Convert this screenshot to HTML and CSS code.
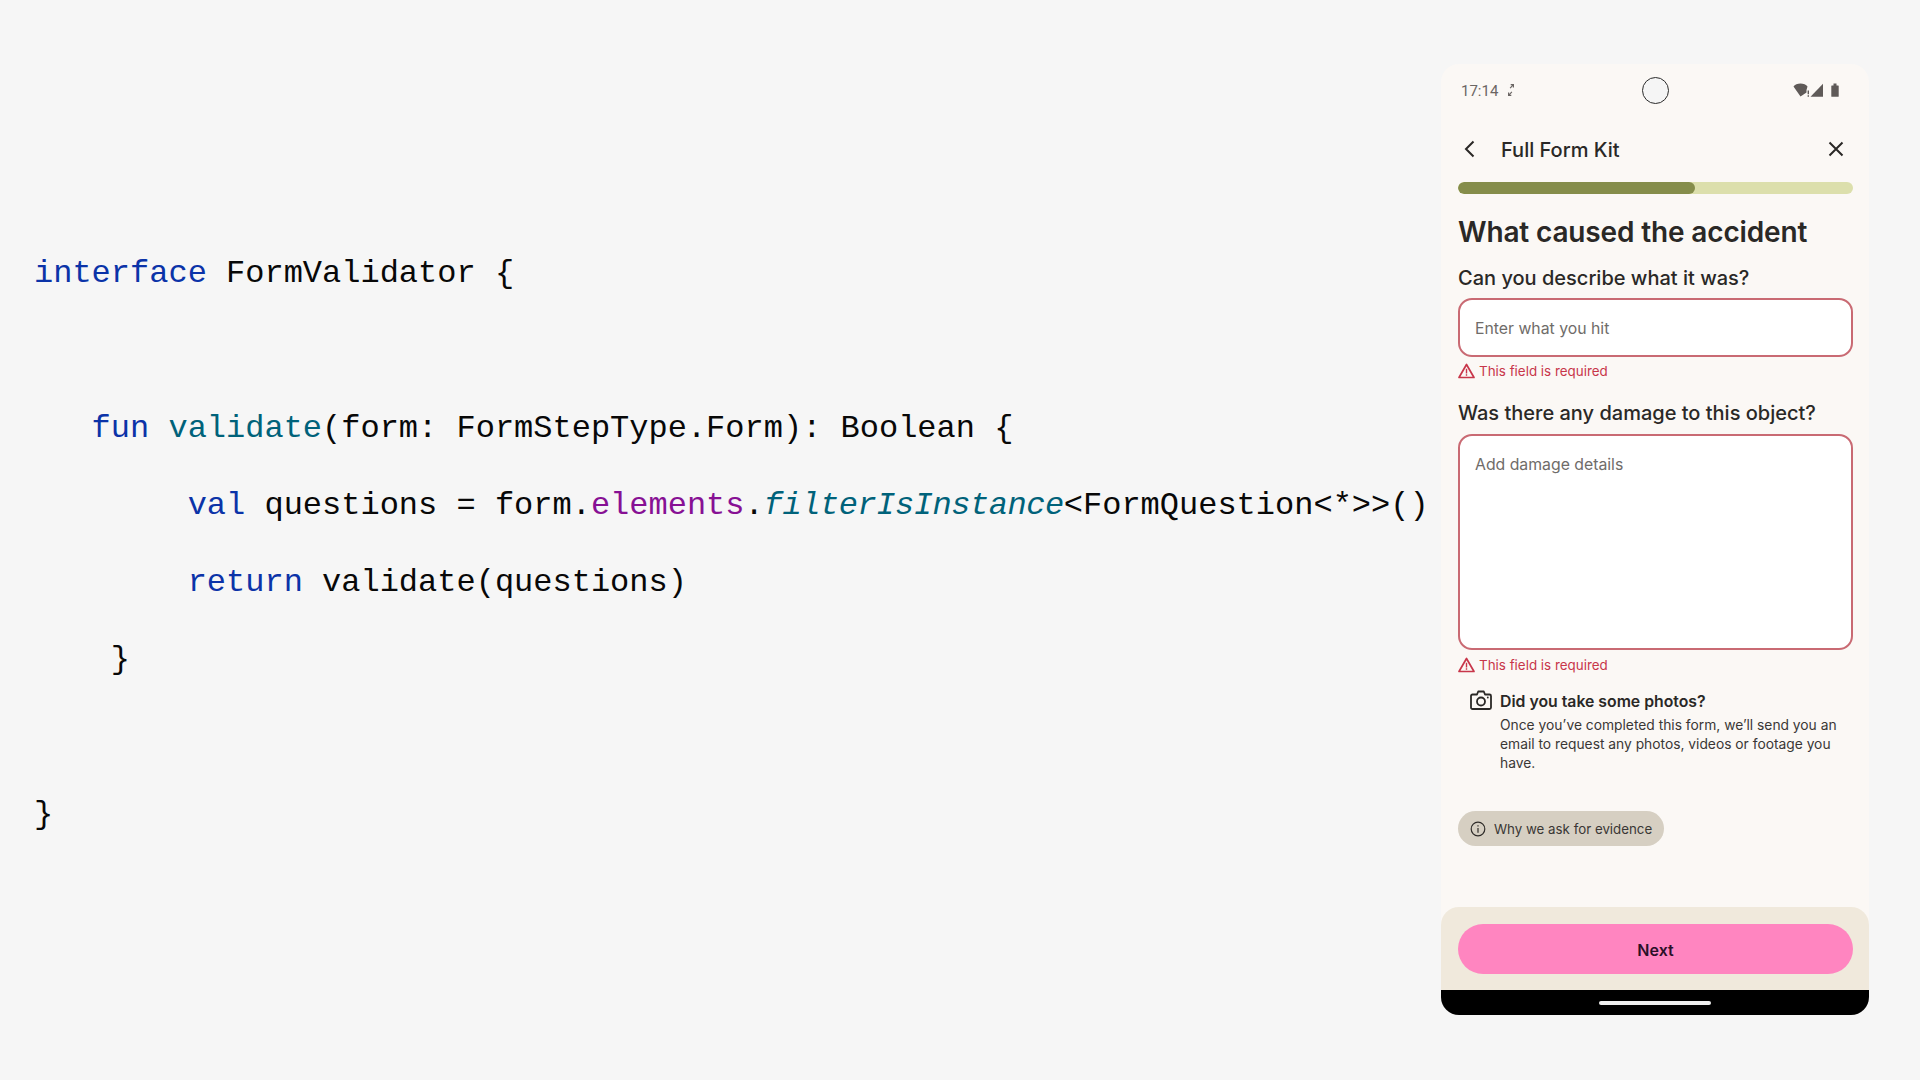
FILE: index.html
```html
<!DOCTYPE html>
<html lang="en">
<head>
<meta charset="utf-8">
<title>Form validator</title>
<link rel="stylesheet" href="styles.css">
</head>
<body>
<main class="page">
<div class="code">
  <div class="line"><span class="kw">interface</span><span> FormValidator {</span></div>
  <div class="line"></div>
  <div class="line"><span>   </span><span class="kw">fun</span><span> </span><span class="fn">validate</span><span>(form: FormStepType.Form): Boolean {</span></div>
  <div class="line"><span>        </span><span class="kw">val</span><span> questions = form.</span><span class="prop">elements</span><span>.</span><span class="fn it">filterIsInstance</span><span>&lt;FormQuestion&lt;*&gt;&gt;()</span></div>
  <div class="line"><span>        </span><span class="kw">return</span><span> validate(questions)</span></div>
  <div class="line"><span>    }</span></div>
  <div class="line"></div>
  <div class="line"><span>}</span></div>
</div>
<section class="phone">
  <div class="status">
    <div class="status-left">
      <span class="time">17:14</span>
      <svg class="link-ic" width="8" height="14" viewBox="0 0 8 14"><path d="M7 1v3.500H5.800V3L3.600 5.500 2.700 4.700 5 2.200H3.700V1zM1 13V9.500h1.200V11l2.200-2.500.9.800L3 11.800h1.300V13z" fill="#6b6664"/></svg>
    </div>
    <div class="camera"></div>
    <div class="status-right">
      <svg class="sys" width="46" height="14" viewBox="0 0 46 14"><path d="M-.5 3.500C2-.5 11-.5 13.500 3.500L12.500 7v2.500L6.500 13.500z" fill="#5f5a58"/><path d="M13.600 7.500h1.400v3.800h-1.400zM13.600 12.200h1.400v1.500h-1.400z" fill="#5f5a58"/><path d="M29 .8v13H16.500z" fill="#5f5a58"/><path d="M37.800 2.500h1.700V.5h3v2h1.700a.5.5 0 0 1 .5.500v10.300a.5.5 0 0 1-.5.500h-6.400a.5.5 0 0 1-.5-.5V3a.5.5 0 0 1 .5-.5z" fill="#5f5a58"/></svg>
    </div>
  </div>
  <header class="appbar">
    <svg class="back" width="14" height="20" viewBox="0 0 14 20"><path d="M11.500 2.500 4 10l7.500 7.500" fill="none" stroke="#2a2826" stroke-width="2"/></svg>
    <h2 class="app-title">Full Form Kit</h2>
    <svg class="close" width="16" height="16" viewBox="0 0 16 16"><path d="M1.500 1.500l13 13M14.500 1.500l-13 13" fill="none" stroke="#2a2826" stroke-width="2"/></svg>
  </header>
  <div class="content">
    <div class="progress"><div class="progress-fill"></div></div>
    <h1 class="title">What caused the accident</h1>
    <label class="label first">Can you describe what it was?</label>
    <div class="field short">Enter what you hit</div>
    <div class="error">
      <svg width="17" height="16" viewBox="0 0 17 16"><path d="M8.500 1.500 1 14.500h15z" fill="none" stroke="#c8364a" stroke-width="1.700" stroke-linejoin="round"/><path d="M7.800 5.800h1.400v4.600H7.800zM7.800 11.300h1.400v1.500H7.800z" fill="#c8364a"/></svg>
      <span>This field is required</span>
    </div>
    <label class="label second">Was there any damage to this object?</label>
    <div class="field tall">Add damage details</div>
    <div class="error second-error">
      <svg width="17" height="16" viewBox="0 0 17 16"><path d="M8.500 1.500 1 14.500h15z" fill="none" stroke="#c8364a" stroke-width="1.700" stroke-linejoin="round"/><path d="M7.800 5.800h1.400v4.600H7.800zM7.800 11.300h1.400v1.500H7.800z" fill="#c8364a"/></svg>
      <span>This field is required</span>
    </div>
    <div class="note">
      <svg class="cam-ic" width="22" height="20" viewBox="0 0 22 20"><path d="M2.500 4.500H7L8.200 1.500h5.600L15 4.500h4.500a1.500 1.500 0 0 1 1.500 1.500v11.500a1.500 1.500 0 0 1-1.500 1.500h-17A1.500 1.500 0 0 1 1 17.500V6a1.500 1.500 0 0 1 1.500-1.500z" fill="none" stroke="#2a2826" stroke-width="1.800" stroke-linejoin="round"/><circle cx="11" cy="11.500" r="4" fill="none" stroke="#2a2826" stroke-width="1.800"/><circle cx="17.800" cy="7.500" r="0.900" fill="#2a2826"/></svg>
      <div class="note-body">
        <h3 class="note-title">Did you take some photos?</h3>
        <p class="note-text">Once you’ve completed this form, we’ll send you an email to request any photos, videos or footage you have.</p>
      </div>
    </div>
    <div class="chip">
      <svg width="16" height="16" viewBox="0 0 16 16"><circle cx="8" cy="8" r="6.800" fill="none" stroke="#2f2c29" stroke-width="1.200"/><path d="M7.400 7h1.200v4.800H7.400zM7.400 4.300h1.200v1.300H7.400z" fill="#2f2c29"/></svg>
      <span>Why we ask for evidence</span>
    </div>
  </div>
  <footer class="footer"><button class="next">Next</button></footer>
  <div class="navbar"><div class="home"></div></div>
</section>
</main>
</body>
</html>
```
FILE: styles.css
```css
* { box-sizing: border-box; }
html, body { margin: 0; height: 100%; }
body { background: #f6f6f6; overflow: hidden; }
.page { display: flex; justify-content: space-between; align-items: flex-start; height: 1080px; padding: 64px 51px 0 34px; }
.code { margin: 171px 0 0; font-family: "Liberation Mono", monospace; font-size: 32px; color: #080808; }
.line { height: 77.300px; line-height: 77.300px; white-space: pre; }
.kw { color: #0b33a8; }
.fn { color: #00627a; }
.prop { color: #871094; }
.it { font-style: italic; letter-spacing: -0.45px; }
.phone { display: flex; flex-direction: column; width: 428px; height: 951px; background: #fbf8f5; border-radius: 18px; overflow: hidden; font-family: Inter, sans-serif; color: #2a2826; }
.status { display: flex; align-items: center; height: 52px; padding: 0 20px; }
.status-left { display: flex; align-items: center; gap: 9px; flex: 1; }
.status-right { display: flex; justify-content: flex-end; flex: 1; }
.time { padding-top: 2px; font-family: Roboto, sans-serif; font-size: 15px; color: #6b6664; }
.sys { margin-right: 9px; overflow: visible; }
.camera { width: 27px; height: 27px; border-radius: 50%; background: #f5f5f5; border: 1px solid #2b2b2b; }
.appbar { display: flex; align-items: center; height: 66px; padding: 0 25px 0 21px; }
.back { flex: none; }
.app-title { flex: 1; margin: 0 0 0 25px; padding-top: 1px; font-size: 20px; font-weight: 500; }
.close { flex: none; }
.content { display: flex; flex-direction: column; align-items: flex-start; padding: 0 16px 0 17px; flex: 1; }
.progress { width: 395px; height: 12px; border-radius: 6px; background: #dcdfac; overflow: hidden; }
.progress-fill { width: 60%; height: 100%; border-radius: 6px; background: #858d4b; }
.title { margin: 20px 0 0; font-size: 28px; line-height: 36px; font-weight: 600; letter-spacing: -0.15px; }
.label { display: block; font-size: 20px; line-height: 26px; font-weight: 500; }
.label.first { margin-top: 15px; }
.label.second { margin-top: 20px; }
.field { width: 395px; margin-top: 7px; background: #fff; border: 2px solid #c96a73; border-radius: 14px; padding: 0 15px; font-size: 15.800px; color: #6f6c69; }
.field.short { height: 59px; line-height: 57px; }
.field.tall { height: 216px; margin-top: 8px; padding-top: 17px; line-height: 24px; }
.error { display: flex; align-items: center; gap: 4px; height: 18px; margin-top: 5px; font-size: 13.400px; color: #c8364a; }
.second-error { margin-top: 6px; }
.note { display: flex; margin: 16px 0 0 12px; gap: 8px; }
.cam-ic { flex: none; }
.note-body { width: 350px; }
.note-title { margin: 0; padding-top: 1px; font-size: 15.800px; line-height: 22px; font-weight: 600; }
.note-text { margin: 3px 0 0; font-size: 13.800px; line-height: 19px; color: #3a3735; }
.chip { display: flex; align-items: center; gap: 8px; height: 35px; margin-top: 38px; padding: 1px 12px 0; border-radius: 18px; background: #d6cfc2; font-size: 13.300px; color: #3a3735; }
.footer { height: 83px; padding: 17px 17px 0; background: #f0e9dc; border-radius: 18px 18px 0 0; }
.next { display: block; width: 395px; height: 50px; padding: 2px 0 0; border: 0; border-radius: 25px; background: #ff85c0; font: 600 16px Inter, sans-serif; color: #2b1028; }
.navbar { display: flex; justify-content: center; align-items: center; height: 25px; background: #000; }
.home { width: 112px; height: 4px; border-radius: 2px; background: #f0f0f0; }
```
